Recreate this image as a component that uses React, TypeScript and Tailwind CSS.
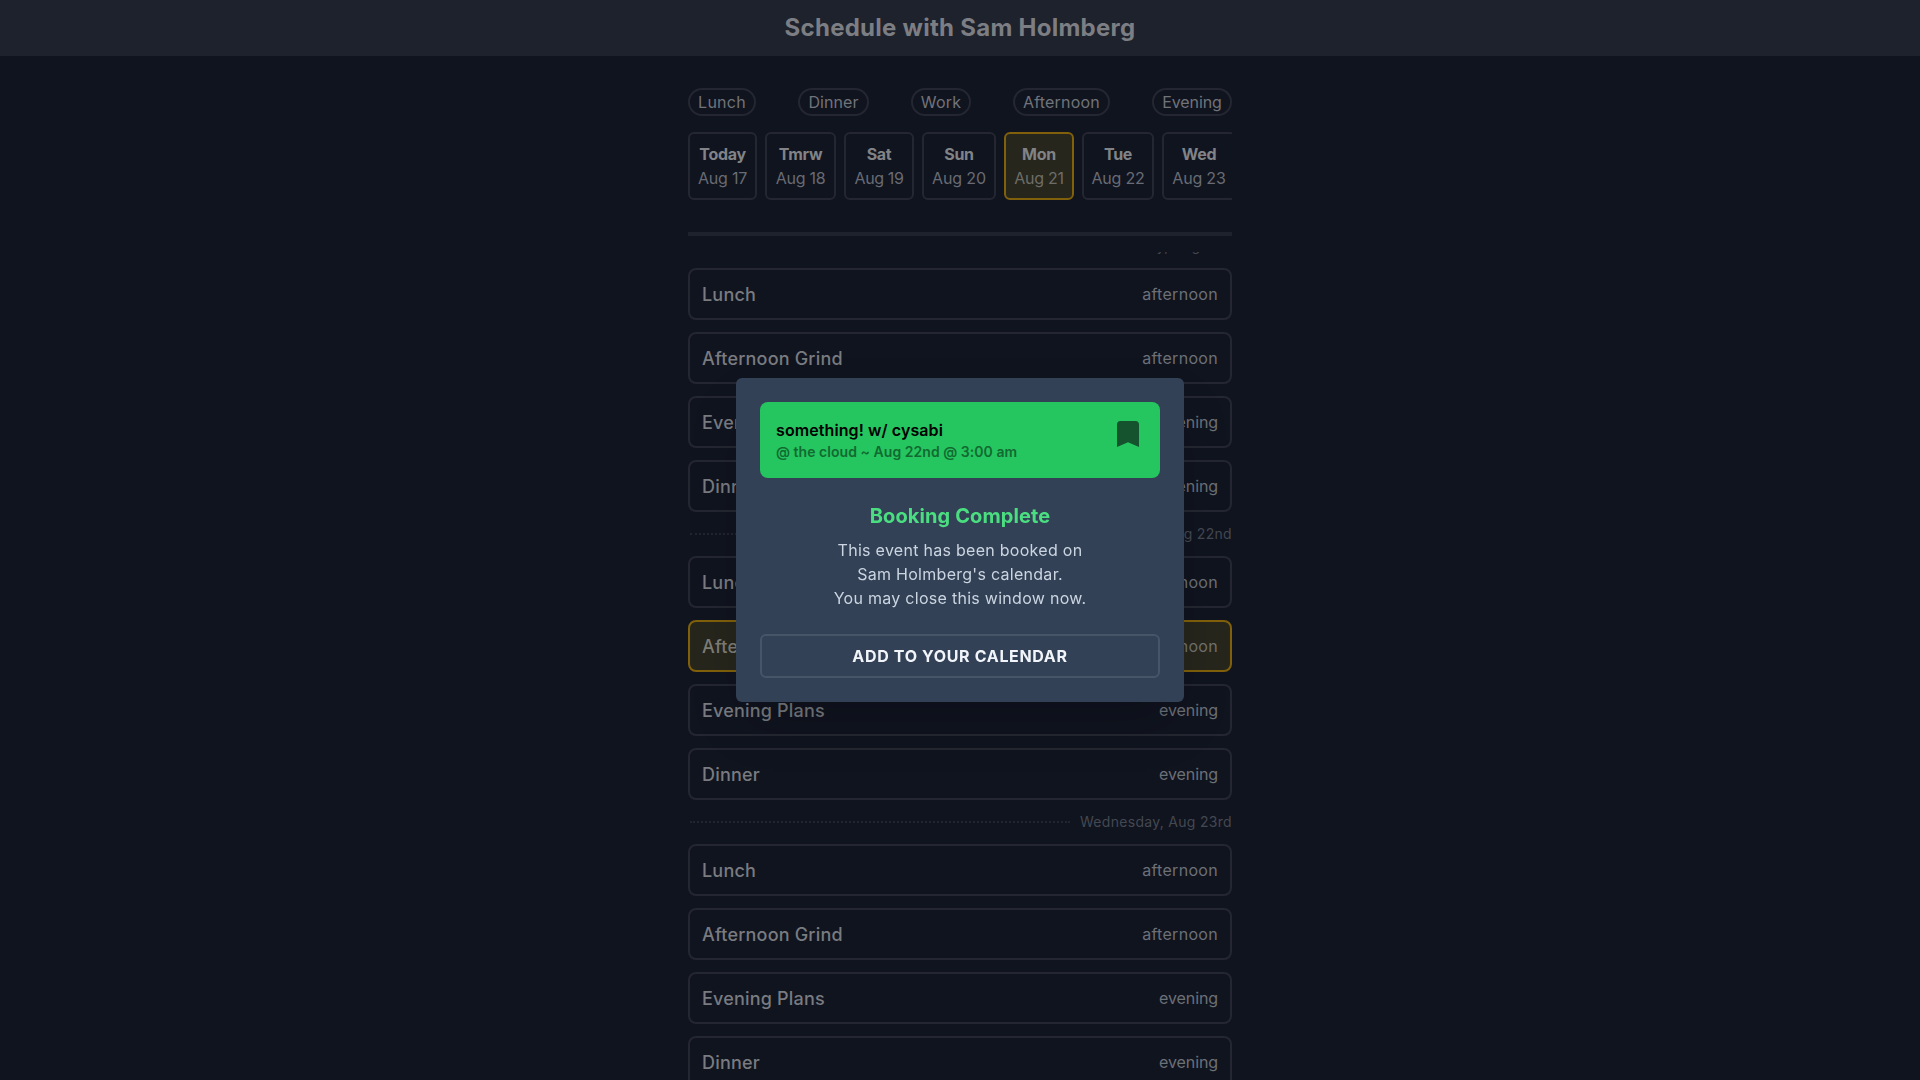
import React from 'react';

const filters = [
  { label: 'Lunch', size: 'w-[68px] tracking-[0.25px]' },
  { label: 'Dinner', size: 'w-[71px] tracking-[0.05px]' },
  { label: 'Work', size: 'w-[60px] tracking-[0.2px]' },
  { label: 'Afternoon', size: 'w-[97px] tracking-[0.2px]' },
  { label: 'Evening', size: 'w-[80px] tracking-[-0.1px]' },
];

const days = [
  { day: 'Today', date: 'Aug 17', size: 'w-[69px]', track: 'tracking-[-0.25px]' },
  { day: 'Tmrw', date: 'Aug 18', size: 'w-[71px]', track: 'tracking-[-0.25px]' },
  { day: 'Sat', date: 'Aug 19', size: 'w-[70px]', track: 'tracking-[-0.4px]' },
  { day: 'Sun', date: 'Aug 20', size: 'w-[74px]', track: 'tracking-[-0.15px]' },
  { day: 'Mon', date: 'Aug 21', size: 'w-[70px]', track: 'tracking-[-0.3px]', active: true },
  { day: 'Tue', date: 'Aug 22', size: 'w-[72px]', track: 'tracking-[-0.2px]' },
  { day: 'Wed', date: 'Aug 23', size: 'w-[74px]', track: 'tracking-[-0.2px]' },
];

const slots = [
  { name: 'Lunch', time: 'afternoon' },
  { name: 'Afternoon Grind', time: 'afternoon' },
  { name: 'Evening Plans', time: 'evening' },
  { name: 'Dinner', time: 'evening' },
];

const agenda = [
  { date: 'Monday, Aug 21st', selected: '' },
  { date: 'Tuesday, Aug 22nd', selected: 'Afternoon Grind' },
  { date: 'Wednesday, Aug 23rd', selected: '' },
];

function Slot({ name, time, active }: { name: string; time: string; active: boolean }) {
  return (
    <div
      className={`flex h-[52px] shrink-0 items-center justify-between rounded-lg border-2 px-3 ${
        active ? 'border-[#80600a] bg-[#26261d]' : 'border-[#242731]'
      }`}
    >
      <span className={`pt-0.5 text-lg font-medium tracking-[0.19px] ${active ? 'text-[#7e7d76]' : 'text-[#797b80]'}`}>
        {name}
      </span>
      <span
        className={`${time === 'afternoon' ? 'tracking-[0.3px]' : 'tracking-[-0.1px]'} ${
          active ? 'text-[#72726b]' : 'text-[#6c7077]'
        }`}
      >
        {time}
      </span>
    </div>
  );
}

function BookingModal() {
  return (
    <div className="fixed inset-0 flex items-center justify-center">
      <div className="w-[448px] rounded-md bg-[#334156] p-6 shadow-2xl">
        <div className="flex h-[76px] items-start justify-between rounded-lg bg-[#25c65f] p-4">
          <div>
            <div className="font-semibold tracking-[0.09px] text-black">something! w/ cysabi</div>
            <div className="text-sm font-semibold tracking-[0.04px] text-[#126a31]">@ the cloud ~ Aug 22nd @ 3:00 am</div>
          </div>
          <svg className="mt-[3px] mr-[5px] h-[26px] w-[22px]" viewBox="0 0 22 26" fill="#14532d">
            <path d="M0 26V3.2C0 1.4 1.4 0 3.2 0h15.6C20.6 0 22 1.4 22 3.2V26l-11-4.8z" />
          </svg>
        </div>
        <h2 className="mt-6 text-center text-xl font-bold tracking-[0.1px] text-[#4ade80]">Booking Complete</h2>
        <p className="mt-2 text-center tracking-[0.28px] text-[#cbd5e1]">
          This event has been booked on
          <br />
          Sam Holmberg's calendar.
          <br />
          You may close this window now.
        </p>
        <button className="mt-6 flex h-11 w-full items-center justify-center rounded-md border-2 border-[#475569] font-bold tracking-[0.66px] text-[#f1f5f9]">
          ADD TO YOUR CALENDAR
        </button>
      </div>
    </div>
  );
}

export default function App() {
  return (
    <div className="flex h-screen flex-col items-center overflow-hidden bg-[#10141f] font-['Inter',sans-serif]">
      <header className="flex h-14 w-full shrink-0 items-center justify-center bg-[#1e222c]">
        <h1 className="text-2xl font-bold tracking-[0.26px] text-[#7c7e83]">Schedule with Sam Holmberg</h1>
      </header>
      <main className="flex min-h-0 w-[544px] flex-1 flex-col pt-8">
        <div className="flex shrink-0 justify-between">
          {filters.map((f) => (
            <span
              key={f.label}
              className={`flex h-7 items-center justify-center rounded-full border-2 border-[#242731] text-[#707379] ${f.size}`}
            >
              {f.label}
            </span>
          ))}
        </div>
        <div className="mt-4 flex shrink-0 gap-2 overflow-hidden">
          {days.map((d) => (
            <div
              key={d.day}
              className={`h-[68px] shrink-0 rounded-md border-2 py-2 text-center whitespace-nowrap ${d.size} ${
                d.active ? 'border-[#80600a] bg-[#26261d]' : 'border-[#242731]'
              }`}
            >
              <div className="font-bold tracking-[-0.3px] text-[#818387]">{d.day}</div>
              <div className={`${d.track} ${d.active ? 'text-[#6d6d67]' : 'text-[#686b73]'}`}>{d.date}</div>
            </div>
          ))}
        </div>
        <div className="mt-8 h-1 shrink-0 bg-[#1e222c]" />
        <div className="mt-4 min-h-0 flex-1 overflow-hidden">
          <div className="-mt-4 flex flex-col gap-3">
            {agenda.map((g) => (
              <React.Fragment key={g.date}>
                <div className="flex h-5 shrink-0 items-center gap-2.5">
                  <div className="ml-0.5 flex-1 border-t-2 border-dotted border-[#22252f]" />
                  <span className="text-sm tracking-[0.3px] text-[#444851]">{g.date}</span>
                </div>
                {slots.map((s) => (
                  <Slot key={s.name} {...s} active={g.selected === s.name} />
                ))}
              </React.Fragment>
            ))}
          </div>
        </div>
      </main>
      <BookingModal />
    </div>
  );
}
